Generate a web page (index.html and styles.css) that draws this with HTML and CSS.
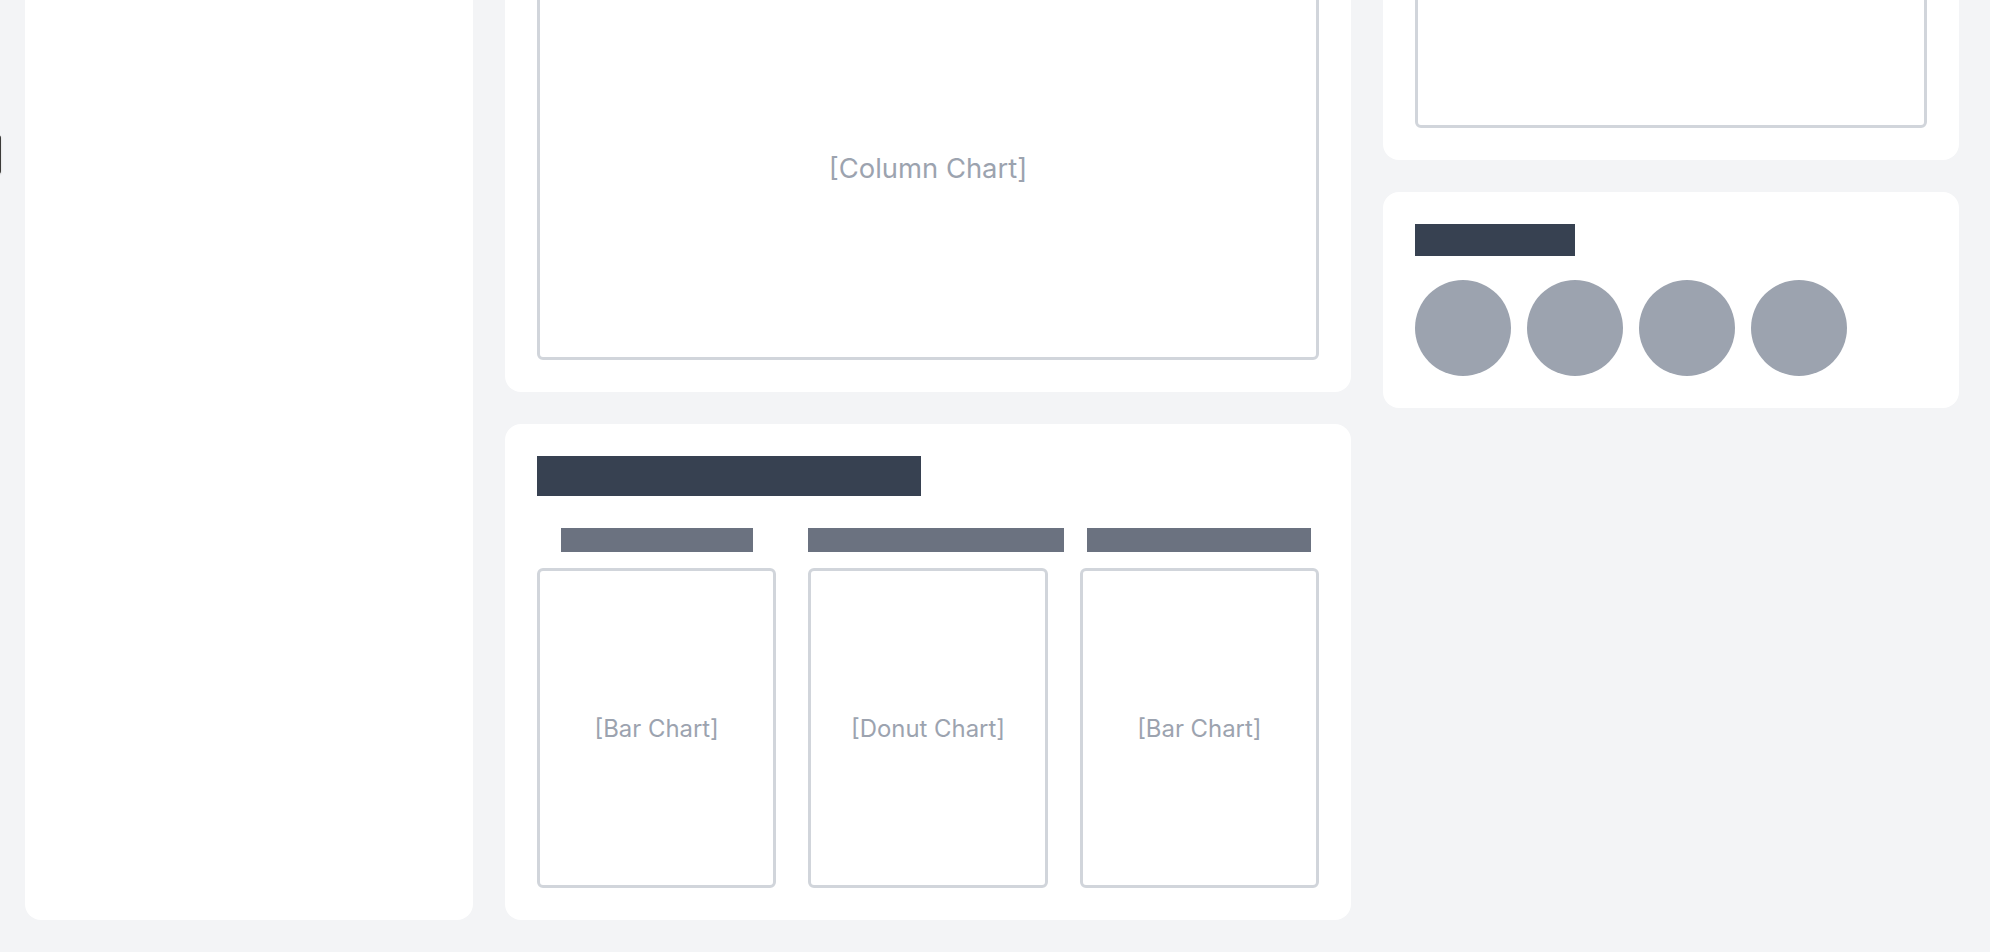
FILE: index.html
```html
<!DOCTYPE html>
<html lang="en">
<head>
<meta charset="utf-8">
<title>Dashboard</title>
<link rel="stylesheet" href="styles.css">
</head>
<body>
<div class="viewport">
  <div class="layout">
    <aside class="card sidebar"></aside>

    <main class="column">
      <section class="card">
        <div class="title title-wide"></div>
        <div class="chart chart-column"><span class="chart-label chart-label-lg">[Column Chart]</span></div>
      </section>

      <section class="card">
        <div class="title title-main"></div>
        <div class="mini-grid">
          <div class="mini">
            <div class="sub sub-a"></div>
            <div class="chart chart-mini"><span class="chart-label">[Bar Chart]</span></div>
          </div>
          <div class="mini">
            <div class="sub sub-b"></div>
            <div class="chart chart-mini"><span class="chart-label">[Donut Chart]</span></div>
          </div>
          <div class="mini">
            <div class="sub sub-c"></div>
            <div class="chart chart-mini"><span class="chart-label">[Bar Chart]</span></div>
          </div>
        </div>
      </section>
    </main>

    <div class="column">
      <section class="card">
        <div class="title title-small"></div>
        <div class="chart chart-side"></div>
      </section>
      <section class="card">
        <div class="title title-small"></div>
        <div class="avatars">
          <div class="avatar"></div>
          <div class="avatar"></div>
          <div class="avatar"></div>
          <div class="avatar"></div>
        </div>
      </section>
    </div>
  </div>
</div>
<div class="edge-toggle"></div>
</body>
</html>
```

FILE: styles.css
```css
html, body {
  margin: 0;
  padding: 0;
  background: #f3f4f6;
  font-family: Inter, "Liberation Sans", sans-serif;
}

.viewport {
  height: 100vh;
  overflow: hidden;
  display: flex;
  flex-direction: column;
  justify-content: flex-end;
}

.layout {
  flex: none;
  display: grid;
  grid-template-columns: 448px 1fr 576px;
  gap: 32px;
  padding: 32px 31px 32px 25px;
  align-items: start;
}

.card {
  background: #ffffff;
  border-radius: 16px;
  padding: 32px;
  display: flex;
  flex-direction: column;
}

.sidebar {
  align-self: stretch;
  padding: 0;
}

.column {
  display: flex;
  flex-direction: column;
  gap: 32px;
}

.title {
  background: #374151;
  flex: none;
}

.title-wide {
  width: 320px;
  height: 40px;
  margin-bottom: 32px;
}

.title-main {
  width: 384px;
  height: 40px;
  margin-bottom: 32px;
}

.title-small {
  width: 160px;
  height: 32px;
  margin-bottom: 24px;
}

.chart {
  border: 3px solid #d1d5db;
  border-radius: 6px;
  display: flex;
  align-items: center;
  justify-content: center;
  box-sizing: border-box;
}

.chart-column {
  height: 384px;
}

.chart-side {
  height: 168px;
}

.chart-mini {
  height: 320px;
}

.chart-label {
  color: #9ca3af;
  font-size: 23.9px;
  line-height: 1;
  padding-top: 2px;
}

.chart-label-lg {
  font-size: 27.4px;
}

.mini-grid {
  display: grid;
  grid-template-columns: repeat(3, 1fr);
  gap: 32px;
}

.mini {
  display: flex;
  flex-direction: column;
  gap: 16px;
  min-width: 0;
}

.sub {
  height: 24px;
  background: #6b7280;
  margin: 0 auto;
}

.sub-a { width: 192px; }
.sub-b { width: 256px; margin: 0; }
.sub-c { width: 224px; }

.avatars {
  display: flex;
  gap: 16px;
}

.avatar {
  width: 96px;
  height: 96px;
  border-radius: 50%;
  background: #9ca3af;
}

.edge-toggle {
  position: fixed;
  left: -39px;
  top: 135px;
  width: 40px;
  height: 39px;
  background: #3b3a38;
  border-radius: 3px;
  box-shadow: 0 1px 2px rgba(0, 0, 0, 0.15);
}
```
